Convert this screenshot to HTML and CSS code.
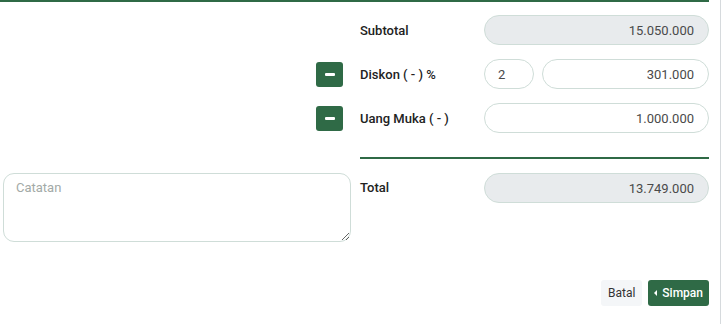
FILE: index.html
```html
<!DOCTYPE html>
<html lang="en">
<head>
    <meta charset="UTF-8">
    <meta name="viewport" content="width=device-width, initial-scale=1.0">
    <title>Ringkasan Pembayaran</title>
    <link rel="stylesheet" href="styles.css">
</head>
<body>
    <div class="page">
        <div class="summary">
            <div class="side"></div>
            <label class="label">Subtotal</label>
            <input type="text" class="field readonly" value="15.050.000" readonly>

            <div class="side"><button type="button" class="btn-minus"><span></span></button></div>
            <label class="label">Diskon ( - ) %</label>
            <div class="split">
                <input type="text" class="field percent" value="2">
                <input type="text" class="field" value="301.000">
            </div>

            <div class="side"><button type="button" class="btn-minus"><span></span></button></div>
            <label class="label">Uang Muka ( - )</label>
            <input type="text" class="field" value="1.000.000">

            <div class="side"></div>
            <div class="divider"></div>

            <div class="side note-cell">
                <textarea class="note" placeholder="Catatan"></textarea>
            </div>
            <label class="label total-label">Total</label>
            <input type="text" class="field readonly total-field" value="13.749.000" readonly>
        </div>

        <div class="actions">
            <button type="button" class="btn-cancel">Batal</button>
            <button type="button" class="btn-save"><span class="arrow"></span>Simpan</button>
        </div>
    </div>
</body>
</html>
```

FILE: styles.css
```css
body {
    font-family: 'Roboto', 'Liberation Sans', sans-serif;
    background-color: #fff;
    margin: 0;
    padding: 0;
}

.page {
    width: 721px;
    height: 324px;
    border-right: 1px solid #d6dadd;
    box-sizing: border-box;
}

.summary {
    width: 709px;
    border-top: 2px solid #2f6a46;
    padding-top: 13px;
    display: grid;
    grid-template-columns: 360px 124px 225px;
    row-gap: 14px;
    align-items: center;
}

.side {
    display: flex;
    justify-content: flex-end;
    padding-right: 17px;
    align-self: stretch;
    align-items: center;
}

.label {
    font-size: 13px;
    font-weight: 500;
    color: #222;
}

.field {
    width: 100%;
    height: 30px;
    padding: 0 14px;
    border: 1px solid #cfddd8;
    border-radius: 15px;
    box-sizing: border-box;
    font-family: inherit;
    font-size: 13px;
    color: #4a4a4a;
    text-align: right;
    background-color: #fff;
    outline: none;
}

.readonly {
    background-color: #e8ebed;
}

.split {
    display: flex;
    gap: 8px;
}

.split .percent {
    width: 50px;
    flex: none;
    text-align: left;
    padding-left: 13px;
}

.btn-minus {
    width: 27px;
    height: 25px;
    border: none;
    border-radius: 3px;
    background-color: #2f6a46;
    display: flex;
    align-items: center;
    justify-content: center;
    padding: 0;
    cursor: pointer;
}

.btn-minus span {
    width: 10px;
    height: 3px;
    background-color: #fff;
    border-radius: 1px;
}

.divider {
    grid-column: 2 / 4;
    height: 2px;
    background-color: #2f6a46;
    margin-top: 10px;
}

.note-cell {
    justify-content: flex-start;
    padding: 0 9px 0 3px;
    align-self: start;
}

.note {
    width: 348px;
    height: 69px;
    padding: 6px 12px;
    border: 1px solid #cfddd8;
    border-radius: 11px;
    box-sizing: border-box;
    font-family: inherit;
    font-size: 13px;
    color: #555;
    resize: vertical;
    outline: none;
}

.note::placeholder {
    color: #a3aaa7;
}

.total-label,
.total-field {
    align-self: start;
}

.total-label {
    line-height: 30px;
}

.actions {
    width: 709px;
    display: flex;
    justify-content: flex-end;
    gap: 6px;
    margin-top: 38px;
}

.btn-cancel,
.btn-save {
    height: 26px;
    border: none;
    border-radius: 3px;
    font-family: inherit;
    font-size: 12px;
    cursor: pointer;
}

.btn-cancel {
    background-color: #f4f6f8;
    color: #333;
    padding: 0 7px;
}

.btn-save {
    background-color: #2f6a46;
    color: #fff;
    font-weight: 500;
    padding: 0 6px;
    display: flex;
    align-items: center;
}

.arrow {
    width: 0;
    height: 0;
    border-top: 3px solid transparent;
    border-bottom: 3px solid transparent;
    border-right: 3px solid #fff;
    margin-right: 5px;
}
```
